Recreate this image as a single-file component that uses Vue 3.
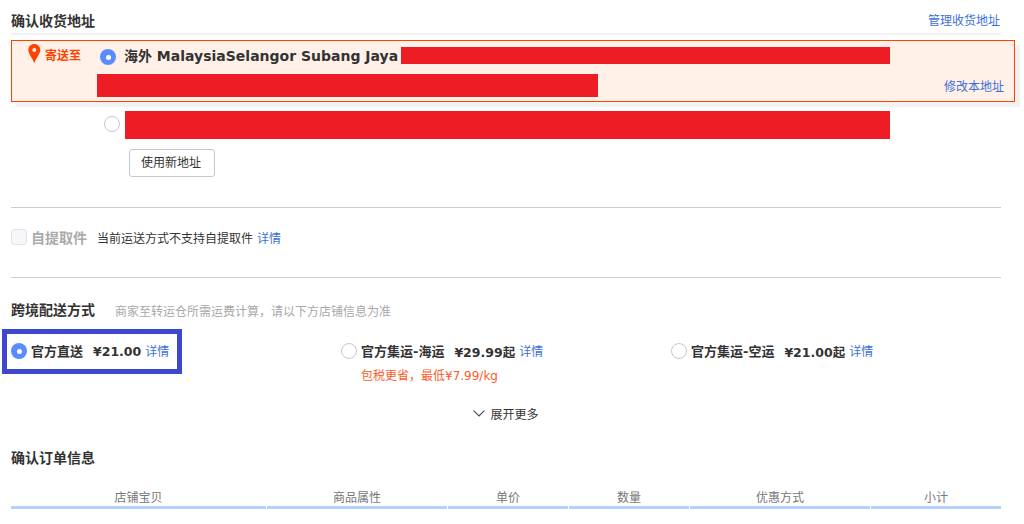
<script setup>
const columns = [
  { label: '店铺宝贝' },
  { label: '商品属性' },
  { label: '单价' },
  { label: '数量' },
  { label: '优惠方式' },
  { label: '小计' }
]
const options = [
  { name: '官方直送', price: '¥21.00', checked: true },
  { name: '官方集运-海运', price: '¥29.99起', checked: false, note: '包税更省，最低¥7.99/kg' },
  { name: '官方集运-空运', price: '¥21.00起', checked: false }
]
</script>

<template>
  <div class="page">
    <div class="head">
      <h2 class="title">确认收货地址</h2>
      <a class="link">管理收货地址</a>
    </div>

    <div class="selected">
      <div class="send-to">
        <svg class="pin" width="13" height="19" viewBox="0 0 13 19">
          <path fill="#ff4200" fill-rule="evenodd" d="M6.3 0C2.9 0 0.3 2.6 0.3 6 0.3 9.6 4.4 14 6.3 19 8.2 14 12.3 9.6 12.3 6 12.3 2.6 9.7 0 6.3 0ZM6.3 4A2 2 0 1 1 6.3 8 2 2 0 0 1 6.3 4Z" />
        </svg>
        <span class="send-label">寄送至</span>
      </div>
      <div class="selected-body">
        <div class="line-one">
          <span class="radio on"></span>
          <span class="addr-text">海外 MalaysiaSelangor Subang Jaya</span>
          <span class="mask mask-a"></span>
        </div>
        <div class="line-two">
          <span class="mask mask-b"></span>
          <a class="link edit">修改本地址</a>
        </div>
      </div>
    </div>

    <div class="other">
      <span class="radio"></span>
      <span class="mask mask-c"></span>
    </div>
    <button class="new-btn" type="button">使用新地址</button>

    <hr class="divider first" />

    <div class="pickup">
      <span class="checkbox"></span>
      <span class="pickup-label">自提取件</span>
      <span class="pickup-note">当前运送方式不支持自提取件</span>
      <a class="link detail">详情</a>
    </div>

    <hr class="divider second" />

    <div class="ship-head">
      <h2 class="title">跨境配送方式</h2>
      <span class="ship-note">商家至转运仓所需运费计算，请以下方店铺信息为准</span>
    </div>

    <div class="options">
      <div v-for="o in options" :key="o.name" class="option">
        <div class="option-row">
          <span class="radio" :class="{ on: o.checked }"></span>
          <span class="option-name">{{ o.name }}</span>
          <span class="option-price">{{ o.price }}</span>
          <a class="link">详情</a>
        </div>
        <div v-if="o.note" class="option-note">{{ o.note }}</div>
      </div>
      <div class="highlight"></div>
    </div>

    <div class="more">
      <svg width="12" height="7" viewBox="0 0 12 7">
        <path d="M0.6 0.6 6 6 11.4 0.6" fill="none" stroke="#3c4a5c" stroke-width="1.1" />
      </svg>
      <span>展开更多</span>
    </div>

    <h2 class="title order-title">确认订单信息</h2>

    <div class="table-head">
      <div v-for="c in columns" :key="c.label" class="cell">{{ c.label }}</div>
    </div>
  </div>
</template>

<style>
html, body {
  margin: 0;
  background: #fff;
}
</style>

<style scoped>
.page {
  box-sizing: border-box;
  width: 1024px;
  height: 524px;
  padding: 0 23px 0 11px;
  overflow: hidden;
  position: relative;
  font-family: "DejaVu Sans", "Noto Sans CJK SC", sans-serif;
  font-size: 12px;
  color: #333;
}
.title {
  margin: 0;
  font-size: 14px;
  font-weight: 700;
  line-height: 20px;
  font-family: "DejaVu Sans", "Noto Sans CJK SC", sans-serif;
  color: #333;
}
.link {
  color: #3d6fd9;
  font-size: 12px;
}
.head {
  box-sizing: border-box;
  height: 35px;
  padding-top: 11px;
  display: flex;
  justify-content: space-between;
  border-bottom: 2px solid #f2f2f2;
}
.head .link {
  line-height: 20px;
  margin-right: 1px;
}
.selected {
  box-sizing: border-box;
  width: 1004px;
  height: 62px;
  margin-top: 5px;
  border: 1px solid #ff4200;
  background: #fff1e8;
  box-shadow: 5px 5px 0 #f2f2f2;
  display: flex;
}
.send-to {
  width: 85px;
  flex: none;
  display: flex;
  align-items: flex-start;
  padding-left: 16px;
  box-sizing: border-box;
  padding-top: 3px;
}
.pin {
  flex: none;
}
.send-label {
  margin-left: 4px;
  margin-top: 3px;
  font-size: 12px;
  line-height: 18px;
  font-weight: 700;
  color: #ff4200;
}
.selected-body {
  flex: 1;
  min-width: 0;
}
.line-one {
  display: flex;
  align-items: flex-start;
  height: 17px;
  margin-top: 6px;
  padding-left: 3px;
}
.radio {
  box-sizing: border-box;
  flex: none;
  width: 16px;
  height: 16px;
  border-radius: 50%;
  border: 1px solid #c5c8d4;
  background: #fff;
  display: inline-block;
  position: relative;
}
.radio.on {
  border: 0;
  background: #5b8cff;
}
.radio.on::after {
  content: "";
  position: absolute;
  left: 5.5px;
  top: 5.5px;
  width: 5px;
  height: 5px;
  border-radius: 50%;
  background: #fff;
}
.line-one .radio {
  margin-top: 2px;
}
.addr-text {
  margin-left: 8px;
  margin-top: 1px;
  font-size: 14px;
  font-weight: 700;
  white-space: nowrap;
  line-height: 17px;
  color: #333;
}
.mask {
  display: block;
  flex: none;
  background: #ee1c25;
}
.mask-a {
  width: 489px;
  height: 17px;
  margin-left: 3px;
}
.line-two {
  display: flex;
  justify-content: space-between;
  align-items: flex-end;
  margin-top: 10px;
  height: 23px;
  padding-right: 10px;
}
.mask-b {
  width: 501px;
  height: 23px;
}
.edit {
  line-height: 16px;
  margin-bottom: 2px;
}
.other {
  display: flex;
  align-items: center;
  margin-top: 9px;
  height: 28px;
  padding-left: 93px;
  gap: 5px;
}
.other .radio {
  margin-bottom: 2px;
}
.mask-c {
  width: 765px;
  height: 28px;
}
.new-btn {
  display: block;
  box-sizing: border-box;
  width: 86px;
  height: 28px;
  margin: 10px 0 0 118px;
  padding: 0 2px 3px 0;
  border: 1px solid #c5c8d4;
  border-radius: 3px;
  background: #fff;
  color: #333;
  font-family: inherit;
  font-size: 12px;
}
.divider {
  border: 0;
  height: 1px;
  margin: 0;
  background: #ccc;
}
.divider.first {
  margin-top: 30px;
}
.pickup {
  height: 69px;
  display: flex;
  align-items: center;
  padding-bottom: 11px;
  box-sizing: border-box;
}
.checkbox {
  box-sizing: border-box;
  width: 16px;
  height: 16px;
  border: 1px solid #e3e4ea;
  border-radius: 3px;
  background: #f6f7fa;
}
.pickup-label {
  margin-left: 4px;
  font-size: 14px;
  font-weight: 700;
  color: #aaa;
}
.pickup-note {
  margin-left: 10px;
}
.detail {
  margin-left: 4px;
}
.ship-head {
  display: flex;
  align-items: center;
  margin-top: 22px;
  height: 20px;
}
.ship-note {
  margin-left: 20px;
  color: #a8a8a8;
}
.options {
  position: relative;
  display: flex;
  margin-top: 23px;
  height: 54px;
}
.option {
  width: 330px;
  flex: none;
}
.option-row {
  display: flex;
  align-items: center;
  height: 16px;
}
.option-name {
  margin-left: 4px;
  margin-bottom: 2px;
  font-size: 13px;
  font-weight: 700;
  white-space: nowrap;
}
.option-price {
  margin-left: 10px;
  font-size: 12.5px;
  font-weight: 700;
  white-space: nowrap;
}
.option-row .link {
  margin-left: 4px;
  margin-bottom: 2px;
}
.option-note {
  margin: 9px 0 0 20px;
  line-height: 16px;
  color: #ff5a1f;
}
.highlight {
  position: absolute;
  left: -9px;
  top: -14px;
  width: 180px;
  height: 45px;
  box-sizing: border-box;
  border: 5px solid #3f48cc;
}
.more {
  display: flex;
  align-items: center;
  justify-content: center;
  margin-top: 8px;
  height: 16px;
  gap: 5px;
}
.order-title {
  margin-top: 27px;
}
.table-head {
  display: grid;
  grid-template-columns: 255px 180px 120px 120px 180px 130px;
  gap: 1px;
  margin-top: 20px;
}
.cell {
  height: 21px;
  padding-top: 1px;
  box-sizing: border-box;
  border-bottom: 3px solid #b3d1ff;
  text-align: center;
  line-height: 18px;
  color: #777;
}
</style>
